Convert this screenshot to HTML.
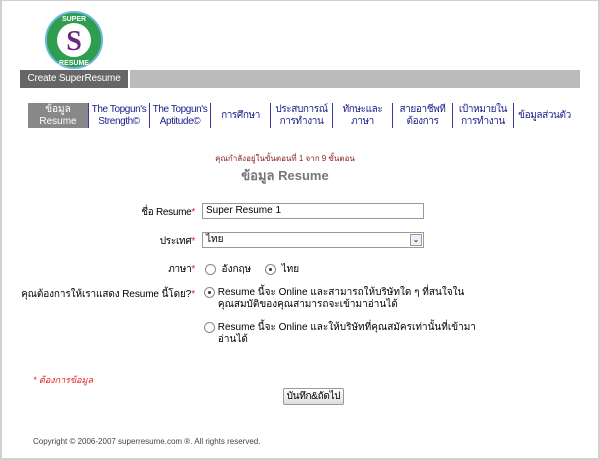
<!DOCTYPE html>
<html><head><meta charset="utf-8"><style>
*{margin:0;padding:0;box-sizing:border-box}
body{width:600px;height:460px;background:#fff;font-family:"Liberation Sans","DejaVu Sans",sans-serif;font-size:10px;color:#000;position:relative;overflow:hidden}
.frame{position:absolute;left:0;top:0;width:600px;height:460px;border:2px solid #d0d0d0;border-top:1px solid #d0d0d0}
.a{position:absolute;white-space:nowrap}
.nav{position:absolute;top:103px;height:25px;color:#1a1a8a;font-size:10px;line-height:12px;text-align:center;border-left:1px solid #3a3a9a;padding-top:1px;white-space:nowrap;letter-spacing:-0.4px;overflow:hidden}
.req{color:#e02020}
.lbl{position:absolute;right:405px;text-align:right;white-space:nowrap;letter-spacing:-0.3px}
.radio{display:inline-block;width:11px;height:11px;border:1px solid #888;border-radius:50%;vertical-align:middle;position:relative;background:#fff}
.radio.on::after{content:"";position:absolute;left:3px;top:3px;width:3px;height:3px;border-radius:50%;background:#333}
</style></head><body>
<div class="frame"></div>
<svg class="a" style="left:44px;top:10px" width="60" height="60" viewBox="0 0 60 60">
<circle cx="30" cy="30" r="28" fill="#2e9e4e" stroke="#6ab6e0" stroke-width="2"/>
<circle cx="30" cy="30" r="17" fill="#fff"/>
<text x="30" y="40" text-anchor="middle" font-family="Liberation Serif,serif" font-weight="bold" font-size="28" fill="#6a2a7a">S</text>
<text x="30" y="11" text-anchor="middle" font-size="7" font-weight="bold" fill="#fff" font-family="Liberation Sans">SUPER</text>
<text x="30" y="55" text-anchor="middle" font-size="7" font-weight="bold" fill="#fff" font-family="Liberation Sans">RESUME</text>
</svg>
<div class="a" style="left:20px;top:70px;width:108px;height:18px;background:#666;color:#fff;font-size:10px;line-height:18px;text-align:center;letter-spacing:-0.2px">Create SuperResume</div>
<div class="a" style="left:130px;top:70px;width:450px;height:18px;background:#bbb"></div>
<div class="a" style="left:28px;top:103px;width:60px;height:25px;background:#888;color:#fff;text-align:center;line-height:12px;padding-top:1px">ข้อมูล<br>Resume</div>
<div class="nav" style="left:88px;width:61px">The Topgun's<br>Strength©</div>
<div class="nav" style="left:149px;width:61px">The Topgun's<br>Aptitude©</div>
<div class="nav" style="left:210px;width:60px;line-height:24px">การศึกษา</div>
<div class="nav" style="left:270px;width:62px">ประสบการณ์<br>การทำงาน</div>
<div class="nav" style="left:332px;width:60px">ทักษะและ<br>ภาษา</div>
<div class="nav" style="left:392px;width:60px">สายอาชีพที่<br>ต้องการ</div>
<div class="nav" style="left:452px;width:61px">เป้าหมายใน<br>การทำงาน</div>
<div class="nav" style="left:513px;width:62px;line-height:24px">ข้อมูลส่วนตัว</div>
<div class="a" style="left:0;width:570px;top:152px;text-align:center;font-size:8px;color:#8a1a1a">คุณกำลังอยู่ในขั้นตอนที่ 1 จาก 9 ขั้นตอน</div>
<div class="a" style="left:0;width:570px;top:165px;text-align:center;font-size:13px;font-weight:bold;color:#777">ข้อมูล Resume</div>
<div class="lbl" style="top:205px">ชื่อ Resume<span class="req">*</span></div>
<div class="a" style="left:202px;top:203px;width:222px;height:16px;border:1px solid #999;padding-left:3px;line-height:14px">Super Resume 1</div>
<div class="lbl" style="top:234px">ประเทศ<span class="req">*</span></div>
<div class="a" style="left:202px;top:232px;width:222px;height:16px;border:1px solid #999;padding-left:3px;line-height:14px">ไทย<span style="position:absolute;right:1px;top:1px;width:12px;height:12px;border:1px solid #999;background:#eef;font-size:8px;line-height:10px;text-align:center">⌄</span></div>
<div class="lbl" style="top:262px">ภาษา<span class="req">*</span></div>
<div class="a" style="left:205px;top:262px"><span class="radio"></span>&nbsp; อังกฤษ &nbsp;&nbsp;&nbsp;&nbsp;<span class="radio on"></span>&nbsp; ไทย</div>
<div class="lbl" style="top:287px;font-size:10px;letter-spacing:-0.1px">คุณต้องการให้เราแสดง Resume นี้โดย?<span class="req">*</span></div>
<div class="a" style="left:204px;top:287px;line-height:12px;letter-spacing:0px"><span class="radio on"></span> Resume นี้จะ Online และสามารถให้บริษัทใด ๆ ที่สนใจใน<br>&nbsp;&nbsp;&nbsp;&nbsp;&nbsp;คุณสมบัติของคุณสามารถจะเข้ามาอ่านได้</div>
<div class="a" style="left:204px;top:322px;line-height:12px;letter-spacing:0px"><span class="radio"></span> Resume นี้จะ Online และให้บริษัทที่คุณสมัครเท่านั้นที่เข้ามา<br>&nbsp;&nbsp;&nbsp;&nbsp;&nbsp;อ่านได้</div>
<div class="a" style="left:33px;top:373px;color:#e02020;font-style:italic;font-size:9px">* ต้องการข้อมูล</div>
<div class="a" style="left:283px;top:388px;width:61px;height:17px;border:1px solid #999;background:linear-gradient(#fff,#ddd);border-radius:2px;text-align:center;line-height:15px;letter-spacing:-0.3px">บันทึก&amp;ถัดไป</div>
<div class="a" style="left:33px;top:437px;font-size:8px;color:#444">Copyright © 2006-2007 superresume.com ®. All rights reserved.</div>
</body></html>
